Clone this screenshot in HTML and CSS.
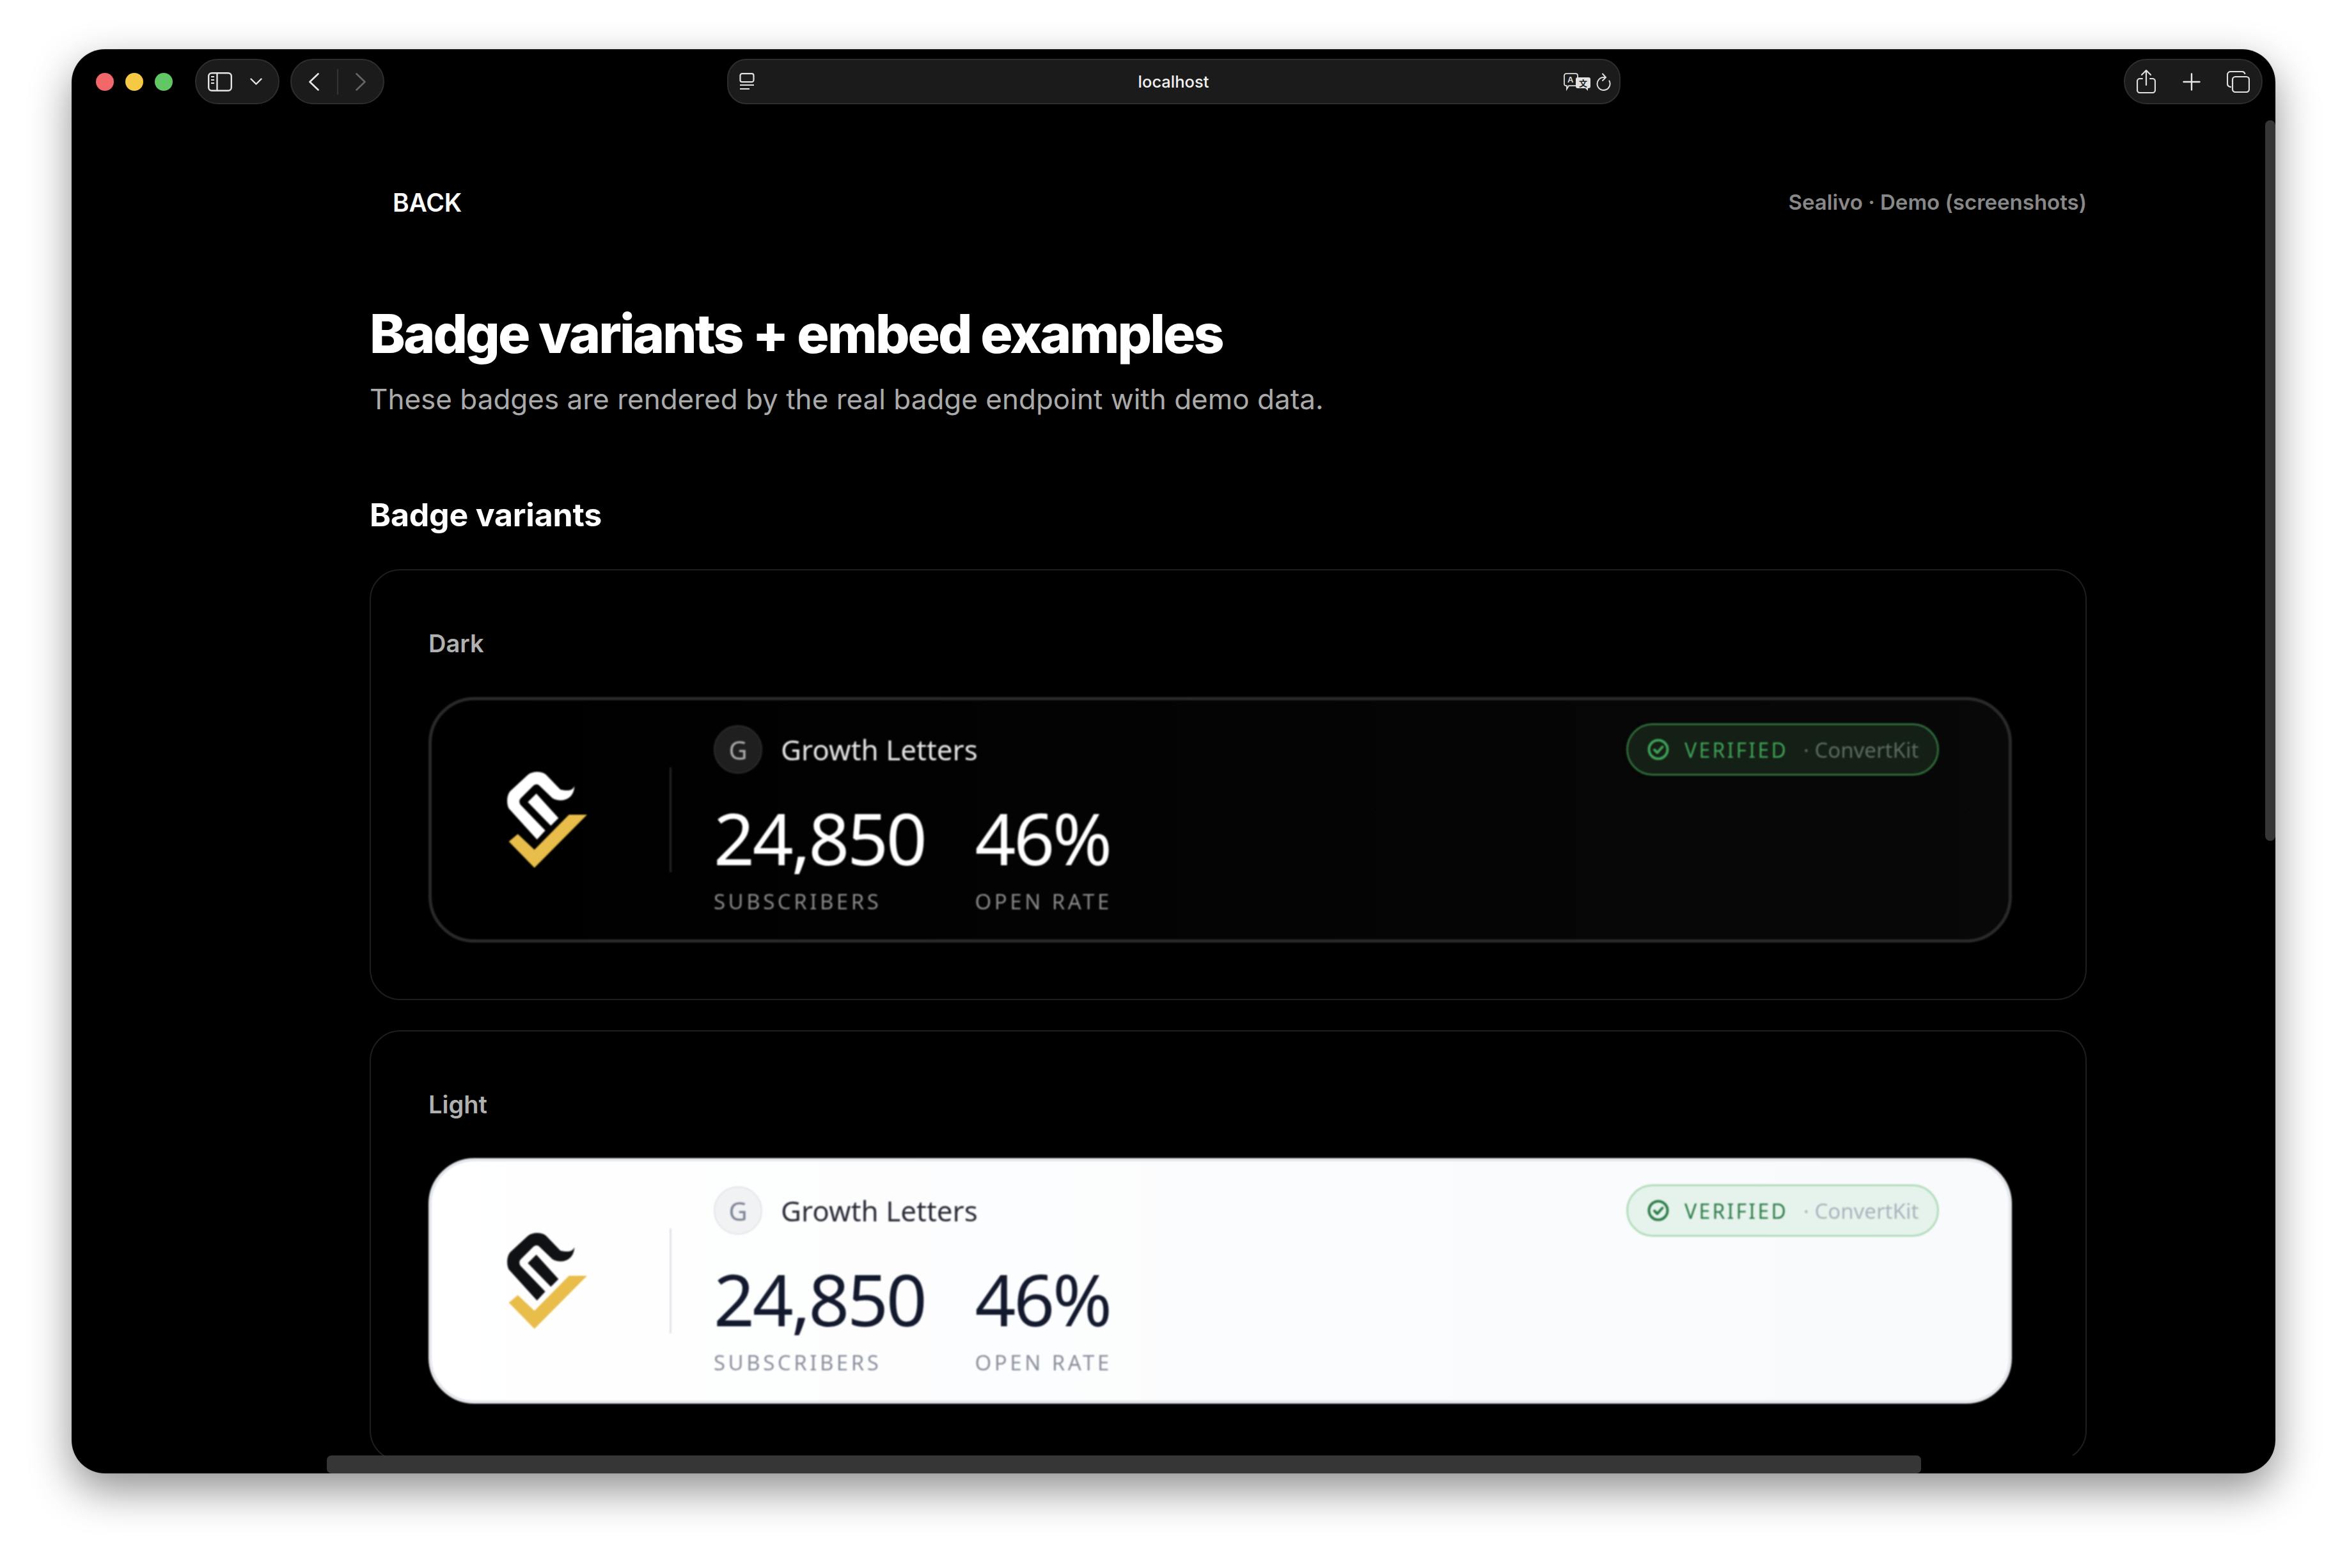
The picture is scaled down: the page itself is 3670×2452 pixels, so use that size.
FILE: index.html
```html
<!DOCTYPE html>
<html lang="en">
<head>
<meta charset="utf-8">
<title>Badge variants</title>
<link rel="stylesheet" href="styles.css">
</head>
<body>
<div class="window">
  <header class="toolbar">
    <div class="tb-left">
      <div class="lights"><span class="light red"></span><span class="light yellow"></span><span class="light green"></span></div>
      <div class="pill side-pill">
        <svg class="ic" width="38" height="30" viewBox="0 0 38 30" fill="none" stroke="#e4e4e4" stroke-width="2.4"><rect x="1.2" y="1.2" width="35.6" height="27.6" rx="5"/><path d="M14.5 1.5v27"/><path d="M5 7h5M5 12h5M5 17h5" stroke-width="2"/></svg>
        <svg class="ic" width="19" height="11" viewBox="0 0 19 11" fill="none" stroke="#e4e4e4" stroke-width="2.4" stroke-linecap="round" stroke-linejoin="round"><path d="M1.5 1.5 9.5 9.5 17.5 1.5"/></svg>
      </div>
      <div class="pill nav-pill">
        <svg class="ic" width="16" height="28" viewBox="0 0 16 28" fill="none" stroke="#e8e8e8" stroke-width="2.6" stroke-linecap="round" stroke-linejoin="round"><path d="M14.5 1.5 1.5 14l13 12.5"/></svg>
        <span class="nav-sep"></span>
        <svg class="ic" width="16" height="28" viewBox="0 0 16 28" fill="none" stroke="#666" stroke-width="2.6" stroke-linecap="round" stroke-linejoin="round"><path d="M1.5 1.5 14.5 14l-13 12.5"/></svg>
      </div>
    </div>
    <div class="pill url-pill">
      <svg class="ic" width="24" height="27" viewBox="0 0 24 27" fill="none" stroke="#e0e0e0" stroke-width="2.2"><rect x="1.5" y="1.2" width="21" height="13" rx="3"/><path d="M1 19h22M1 25h15"/></svg>
      <span class="url-text">localhost</span>
      <span class="url-right">
        <svg class="ic" width="42" height="28" viewBox="0 0 42 28">
          <path d="M4 1.2h15a3 3 0 0 1 3 3v13a3 3 0 0 1-3 3H8l-3 5v-5H4a3 3 0 0 1-3-3V4.200a3 3 0 0 1 3-3z" fill="#1b1b1b" stroke="#ddd" stroke-width="1.800"/>
          <text class="tr-a" x="6" y="15">A</text>
          <path d="M22 7h17a3 3 0 0 1 3 3v11a3 3 0 0 1-3 3h-1v4l-4-4H22a3 3 0 0 1-3-3V10a3 3 0 0 1 3-3z" fill="#e2e2e2"/>
          <text class="tr-b" x="24" y="21">文</text>
        </svg>
        <svg class="ic" width="24" height="28" viewBox="0 0 24 28" fill="none" stroke="#dcdcdc" stroke-width="2" stroke-linecap="round" stroke-linejoin="round"><path d="M20.500 12.500a10 10 0 1 1-9-5.500h3"/><path d="M10 1.500 15 7l-5 5"/></svg>
      </span>
    </div>
    <div class="tb-right">
      <div class="pill action-pill">
        <svg class="ic" width="30" height="37" viewBox="0 0 30 37" fill="none" stroke="#e0e0e0" stroke-width="2.2" stroke-linecap="round" stroke-linejoin="round"><path d="M9 14H5a4 4 0 0 0-4 4v14a4 4 0 0 0 4 4h20a4 4 0 0 0 4-4V18a4 4 0 0 0-4-4h-4"/><path d="M15 24V2M8 8l7-7 7 7"/></svg>
        <svg class="ic" width="28" height="28" viewBox="0 0 28 28" fill="none" stroke="#e8e8e8" stroke-width="2.400" stroke-linecap="round"><path d="M14 1.500v25M1.500 14h25"/></svg>
        <svg class="ic" width="36" height="34" viewBox="0 0 36 34" fill="none" stroke="#e0e0e0" stroke-width="2.200" stroke-linejoin="round"><path d="M7 25H6a5 5 0 0 1-5-5V6a5 5 0 0 1 5-5h18a5 5 0 0 1 4.500 4"/><rect x="9" y="9" width="26" height="24" rx="4.500"/></svg>
      </div>
    </div>
  </header>

  <div class="viewport">
    <main class="page">
      <div class="topbar">
        <a class="back">BACK</a>
        <span class="crumb">Sealivo · Demo (screenshots)</span>
      </div>
      <h1 class="title">Badge variants + embed examples</h1>
      <p class="subtitle">These badges are rendered by the real badge endpoint with demo data.</p>
      <h2 class="section">Badge variants</h2>

      <section class="card">
        <div class="card-label">Dark</div>
        <div class="badge dark">
          <svg class="logo" width="125" height="150" viewBox="400 380 375 450">
            <path class="logo-s" d="M716 446C708 470 680 470 650 463L582 393C560 376 520 376 497 394L415 470C398 488 396 530 408 552L540 697 579 655 462 534C456 524 456 512 464 504L525 443C534 436 544 437 552 445L612 503C640 522 712 522 716 446Z"/>
            <path class="logo-s" d="M497 522 537 482 641 597 605 633Z"/>
            <path class="logo-c" d="M408 707 450 672 528 745 690 581H775L528 830Z"/>
          </svg>
          <span class="badge-sep"></span>
          <div class="badge-main">
            <div class="badge-head">
              <span class="avatar">G</span>
              <span class="name">Growth Letters</span>
              <span class="verified">
                <svg class="check" width="36" height="36" viewBox="0 0 36 36" fill="none" stroke="currentColor" stroke-width="4" stroke-linecap="round" stroke-linejoin="round"><circle cx="18" cy="18" r="14.500"/><path d="M12 18.500l4.500 4.500 8-9"/></svg>
                <span class="v-word">VERIFIED</span>
                <span class="v-src">· ConvertKit</span>
              </span>
            </div>
            <div class="stats">
              <div class="stat"><div class="num">24,850</div><div class="cap">SUBSCRIBERS</div></div>
              <div class="stat"><div class="num">46%</div><div class="cap">OPEN RATE</div></div>
            </div>
          </div>
        </div>
      </section>

      <section class="card">
        <div class="card-label">Light</div>
        <div class="badge light">
          <svg class="logo" width="125" height="150" viewBox="400 380 375 450">
            <path class="logo-s" d="M716 446C708 470 680 470 650 463L582 393C560 376 520 376 497 394L415 470C398 488 396 530 408 552L540 697 579 655 462 534C456 524 456 512 464 504L525 443C534 436 544 437 552 445L612 503C640 522 712 522 716 446Z"/>
            <path class="logo-s" d="M497 522 537 482 641 597 605 633Z"/>
            <path class="logo-c" d="M408 707 450 672 528 745 690 581H775L528 830Z"/>
          </svg>
          <span class="badge-sep"></span>
          <div class="badge-main">
            <div class="badge-head">
              <span class="avatar">G</span>
              <span class="name">Growth Letters</span>
              <span class="verified">
                <svg class="check" width="36" height="36" viewBox="0 0 36 36" fill="none" stroke="currentColor" stroke-width="4" stroke-linecap="round" stroke-linejoin="round"><circle cx="18" cy="18" r="14.500"/><path d="M12 18.500l4.500 4.500 8-9"/></svg>
                <span class="v-word">VERIFIED</span>
                <span class="v-src">· ConvertKit</span>
              </span>
            </div>
            <div class="stats">
              <div class="stat"><div class="num">24,850</div><div class="cap">SUBSCRIBERS</div></div>
              <div class="stat"><div class="num">46%</div><div class="cap">OPEN RATE</div></div>
            </div>
          </div>
        </div>
      </section>
    </main>
  </div>

  <div class="scroll-v"></div>
  <div class="scroll-h"></div>
</div>
</body>
</html>
```
FILE: styles.css
```css
* { box-sizing: border-box; }
html, body { margin: 0; height: 100%; background: #fff; overflow: hidden; }
body { padding: 77px 112px 148px; font-family: Inter, "Liberation Sans", sans-serif; }

.window {
  position: relative;
  width: 3446px;
  height: 2227px;
  background: #000;
  border-radius: 52px;
  overflow: hidden;
  display: flex;
  flex-direction: column;
}
body::before {
  content: "";
  position: absolute;
  left: 112px;
  top: 77px;
  width: 3446px;
  height: 2227px;
  border-radius: 52px;
  box-shadow: 0 26px 66px rgba(0, 0, 0, .44), 0 0 1px rgba(0, 0, 0, .6);
}

/* Toolbar */
.toolbar {
  flex: none;
  height: 101px;
  padding: 15px 20px;
  display: grid;
  grid-template-columns: 1fr 1397px 1fr;
  align-items: center;
}
.tb-left { display: flex; align-items: center; padding-left: 18px; }
.tb-right { display: flex; justify-content: flex-end; }
.lights { display: flex; gap: 18px; margin-right: 35px; }
.light { width: 28px; height: 28px; border-radius: 50%; }
.red { background: #f1676a; }
.yellow { background: #f6c944; }
.green { background: #62c566; }
.pill {
  height: 71px;
  background: #1b1b1b;
  border: 2px solid #2e2e2e;
  border-radius: 36px;
  display: flex;
  align-items: center;
}
.ic { display: block; flex: none; }
.side-pill { width: 132px; padding: 0 25px 0 18px; justify-content: space-between; margin-right: 17px; }
.nav-pill { width: 147px; padding: 0 27px; justify-content: space-between; }
.nav-sep { width: 2px; height: 40px; background: #333; }
.url-pill { padding: 0 12px 0 17px; justify-content: space-between; position: relative; border-radius: 30px; }
.url-text {
  position: absolute;
  left: 0;
  right: 0;
  text-align: center;
  font-size: 25.500px;
  font-weight: 500;
  color: #f2f2f2;
}
.url-right { display: flex; align-items: center; gap: 9px; }
.tr-a { font: 600 13px "Liberation Sans", sans-serif; fill: #ddd; }
.tr-b { font: 700 13px "Noto Sans CJK SC", sans-serif; fill: #1b1b1b; }
.action-pill { width: 217px; padding: 0 18px; justify-content: space-between; }

/* Scrolling area */
.viewport { flex: none; height: 2098px; overflow: hidden; padding-left: 466px; }
.page { width: 2685px; }
.topbar {
  height: 76px;
  margin-top: 100px;
  display: flex;
  align-items: center;
  justify-content: space-between;
  padding-left: 36px;
}
.back { font-size: 39px; font-weight: 600; color: #fff; letter-spacing: -.2px; }
.crumb { font-size: 33px; font-weight: 600; color: #888; }
.title {
  margin: 118px 0 0;
  height: 100px;
  font-size: 84px;
  line-height: 100px;
  font-weight: 800;
  letter-spacing: -2.9px;
  color: #fff;
  white-space: nowrap;
}
.subtitle {
  margin: 24px 0 0;
  height: 56px;
  font-size: 44px;
  line-height: 56px;
  color: #aaa;
  white-space: nowrap;
}
.section {
  margin: 121px 0 0;
  height: 64px;
  font-size: 50px;
  line-height: 64px;
  font-weight: 700;
  letter-spacing: -.2px;
  color: #fff;
}
.card {
  margin-top: 53px;
  height: 674px;
  border: 2px solid #1e1e1e;
  border-radius: 48px;
  padding: 90px 115px 0 90px;
}
.card + .card { margin-top: 47px; }
.card-label {
  height: 48px;
  line-height: 48px;
  font-size: 38px;
  font-weight: 600;
  color: #b0b0b0;
}

/* Badge */
.badge {
  margin-top: 60px;
  width: 2476px;
  height: 384px;
  border: 5px solid #2a2a2a;
  border-radius: 72px;
  display: flex;
  align-items: center;
  padding: 0 109px 0 118px;
  font-family: "Noto Sans", sans-serif;
  filter: blur(.8px);
}
.badge.dark { background: linear-gradient(90deg, #000, #080808); }
.badge.light { background: linear-gradient(90deg, #fff, #f8fafc); border-color: #e3e6eb; }
.logo { flex: none; display: block; margin-right: 129px; }
.dark .logo-s { fill: #fff; }
.light .logo-s { fill: #101114; }
.logo-c { fill: #e9bd4a; }
.badge-sep { flex: none; width: 3px; height: 164px; margin-right: 66px; background: #232323; }
.light .badge-sep { background: #e0e3e8; }
.badge-main { flex: 1; align-self: flex-start; padding-top: 36px; }
.badge-head { display: flex; align-items: center; height: 82px; }
.avatar {
  flex: none;
  width: 76px;
  height: 76px;
  border-radius: 50%;
  display: flex;
  align-items: center;
  justify-content: center;
  font-size: 40px;
  background: #1f1f1f;
  border: 2px solid #2c2c2c;
  color: #a9a9a9;
  margin-right: 29px;
}
.light .avatar { background: #f1f2f4; border-color: #e3e5e9; color: #7d8494; }
.name { font-size: 44px; color: #e4e4e4; }
.light .name { color: #2a2d38; }
.verified {
  margin-left: auto;
  width: 489px;
  height: 82px;
  border: 3px solid #2f6b3a;
  border-radius: 41px;
  background: #141f15;
  color: #3fa257;
  display: flex;
  align-items: center;
  padding-left: 29px;
}
.light .verified { background: #e6f3ec; border-color: #b2dcbb; color: #2e7d4a; }
.check { flex: none; margin-right: 23px; }
.v-word { font-size: 32px; letter-spacing: 3.2px; margin-right: 24px; }
.v-src { font-size: 33px; color: #5d6b60; }
.light .v-src { color: #a9b3bd; }
.stats { display: flex; gap: 78px; margin-top: 41px; }
.num {
  height: 112px;
  font-size: 112px;
  line-height: 112px;
  letter-spacing: -3.3px;
  font-weight: 400;
  color: #fff;
}
.light .num { color: #141a2e; }
.cap { margin-top: 24px; height: 40px; line-height: 40px; font-size: 33px; letter-spacing: 4.500px; color: #8a8a8a; white-space: nowrap; }
.light .cap { color: #8a909c; }

/* Overlay scrollbars */
.scroll-v { position: absolute; left: 3430px; top: 111px; width: 16px; height: 1127px; border-radius: 8px; background: #363636; }
.scroll-h { position: absolute; left: 399px; top: 2199px; width: 2493px; height: 28px; border-radius: 7px; background: #363636; }
```
